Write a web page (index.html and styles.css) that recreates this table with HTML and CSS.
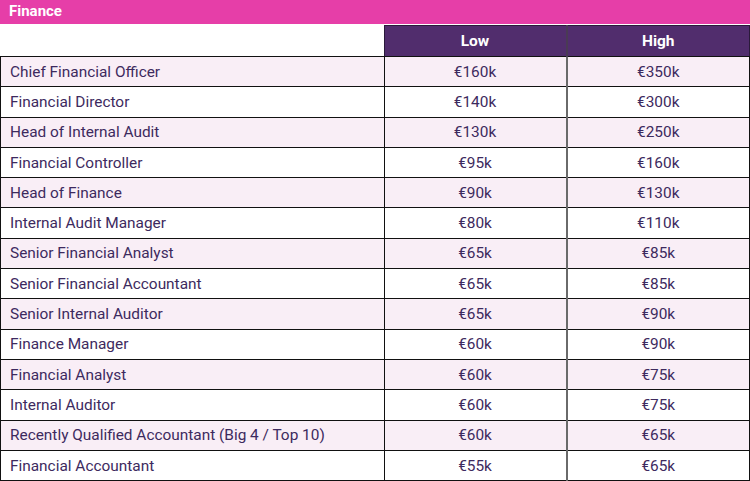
FILE: index.html
```html
<!DOCTYPE html>
<html>
<head>
<meta charset="utf-8">
<link rel="stylesheet" href="styles.css">
</head>
<body>
<div class="title">Finance</div>
<table class="salary">
<thead>
<tr><th class="blank"></th><th class="low">Low</th><th class="high">High</th></tr>
</thead>
<tbody>
<tr><td>Chief Financial Officer</td><td>€160k</td><td>€350k</td></tr>
<tr><td>Financial Director</td><td>€140k</td><td>€300k</td></tr>
<tr><td>Head of Internal Audit</td><td>€130k</td><td>€250k</td></tr>
<tr><td>Financial Controller</td><td>€95k</td><td>€160k</td></tr>
<tr><td>Head of Finance</td><td>€90k</td><td>€130k</td></tr>
<tr><td>Internal Audit Manager</td><td>€80k</td><td>€110k</td></tr>
<tr><td>Senior Financial Analyst</td><td>€65k</td><td>€85k</td></tr>
<tr><td>Senior Financial Accountant</td><td>€65k</td><td>€85k</td></tr>
<tr><td>Senior Internal Auditor</td><td>€65k</td><td>€90k</td></tr>
<tr><td>Finance Manager</td><td>€60k</td><td>€90k</td></tr>
<tr><td>Financial Analyst</td><td>€60k</td><td>€75k</td></tr>
<tr><td>Internal Auditor</td><td>€60k</td><td>€75k</td></tr>
<tr><td>Recently Qualified Accountant (Big 4 / Top 10)</td><td>€60k</td><td>€65k</td></tr>
<tr><td>Financial Accountant</td><td>€55k</td><td>€65k</td></tr>
</tbody>
</table>
</body>
</html>
```
FILE: styles.css
```css
html, body {
  margin: 0;
  padding: 0;
  background: #ffffff;
  font-family: Roboto, "Liberation Sans", sans-serif;
}
.title {
  height: 24px;
  line-height: 22px;
  background: #e63ea8;
  color: #ffffff;
  font-weight: bold;
  font-size: 15px;
  padding-left: 9px;
  box-sizing: border-box;
}
.salary {
  width: 750px;
  border-collapse: collapse;
  table-layout: fixed;
  margin-top: 1px;
}
.salary th {
  height: 30px;
  padding: 0;
  color: #ffffff;
  font-size: 15.5px;
  font-weight: bold;
  text-align: center;
  background: #512d6d;
  border: 1px solid #2a1a3a;
  border-bottom: 1px solid #111111;
}
.salary th.blank {
  width: 383px;
  background: #ffffff;
  border: none;
  border-bottom: 1px solid #111111;
}
.salary th.low {
  width: 181px;
  border-right: 2px solid #4a3a55;
}
.salary td {
  height: 29.3px;
  padding: 0;
  font-size: 15.4px;
  color: #3d2a5e;
  text-align: center;
  border: 1px solid #111111;
}
.salary td:first-child {
  text-align: left;
  padding-left: 9px;
}
.salary td:nth-child(2) {
  border-right: 2px solid #6a6a6a;
}
.salary tbody tr:nth-child(odd) td {
  background: #f9eef6;
}
```
